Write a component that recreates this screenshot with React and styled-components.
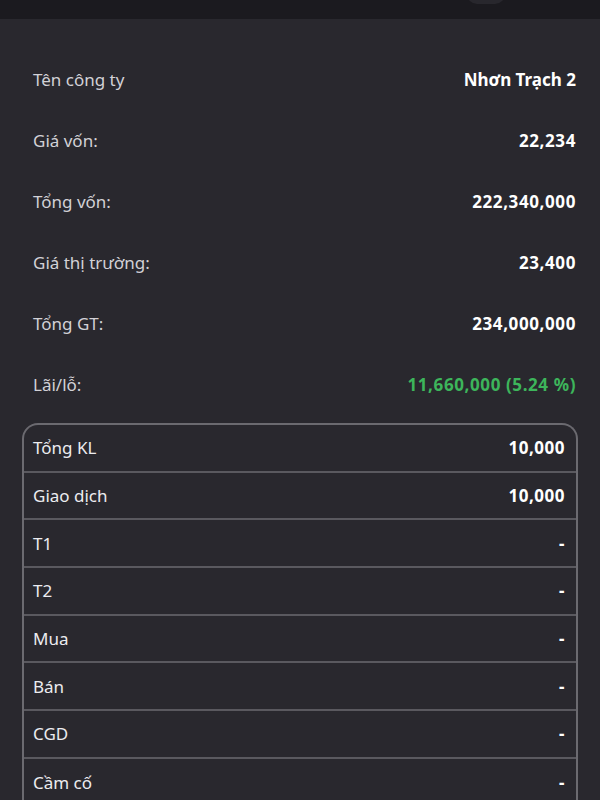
import React from "react";
import styled, { createGlobalStyle } from "styled-components";

const Global = createGlobalStyle`
  html, body { margin: 0; padding: 0; background: #29282e; }
  body { font-family: "Noto Sans", "Open Sans", sans-serif; -webkit-font-smoothing: antialiased; }
  * { box-sizing: border-box; }
`;

const Page = styled.div`
  width: 600px;
  height: 800px;
  overflow: hidden;
  background: #29282e;
  display: flex;
  flex-direction: column;
`;

const Header = styled.div`
  height: 19px;
  background: #1b1a1f;
  display: flex;
  justify-content: flex-end;
  padding-right: 95px;
  flex-shrink: 0;
`;

const HeaderPill = styled.div`
  width: 38px;
  height: 20px;
  margin-top: -16px;
  border-radius: 10px;
  background: #28272d;
`;

const Body = styled.div`
  padding: 30px 24px 0 33px;
  display: flex;
  flex-direction: column;
`;

const InfoRow = styled.div`
  height: 61px;
  display: flex;
  align-items: center;
  justify-content: space-between;
  font-size: 17px;
`;

const Label = styled.span`
  color: #d2d1d6;
`;

const Value = styled.span`
  color: ${(p) => (p.$positive ? "#3db55b" : "#ffffff")};
  font-weight: 700;
  letter-spacing: ${(p) => (p.$numeric ? "0.6px" : "0")};
`;

const Table = styled.div`
  margin: 8px 22px 0 22px;
  border: 2px solid #6b6a70;
  border-bottom: none;
  border-radius: 16px 16px 0 0;
  display: flex;
  flex-direction: column;
`;

const TableRow = styled.div`
  height: 47.7px;
  display: flex;
  align-items: center;
  justify-content: space-between;
  padding: 0 11px 0 9px;
  font-size: 17px;
  border-bottom: 2px solid #5a595f;
  &:last-child { border-bottom: none; }
`;

const TLabel = styled.span`
  color: #ececf0;
`;

const TValue = styled.span`
  color: #ffffff;
  font-weight: 700;
  letter-spacing: 0.5px;
`;

const info = [
  ["Tên công ty", "Nhơn Trạch 2"],
  ["Giá vốn:", "22,234", false, true],
  ["Tổng vốn:", "222,340,000", false, true],
  ["Giá thị trường:", "23,400", false, true],
  ["Tổng GT:", "234,000,000", false, true],
  ["Lãi/lỗ:", "11,660,000 (5.24 %)", true, true],
];

const rows = [
  ["Tổng KL", "10,000"],
  ["Giao dịch", "10,000"],
  ["T1", "-"],
  ["T2", "-"],
  ["Mua", "-"],
  ["Bán", "-"],
  ["CGD", "-"],
  ["Cầm cố", "-"],
];

export default function App() {
  return (
    <>
      <Global />
      <Page>
        <Header>
          <HeaderPill />
        </Header>
        <Body>
          {info.map(([l, v, pos, num]) => (
            <InfoRow key={l}>
              <Label>{l}</Label>
              <Value $positive={pos} $numeric={num}>{v}</Value>
            </InfoRow>
          ))}
        </Body>
        <Table>
          {rows.map(([l, v]) => (
            <TableRow key={l}>
              <TLabel>{l}</TLabel>
              <TValue>{v}</TValue>
            </TableRow>
          ))}
        </Table>
      </Page>
    </>
  );
}
